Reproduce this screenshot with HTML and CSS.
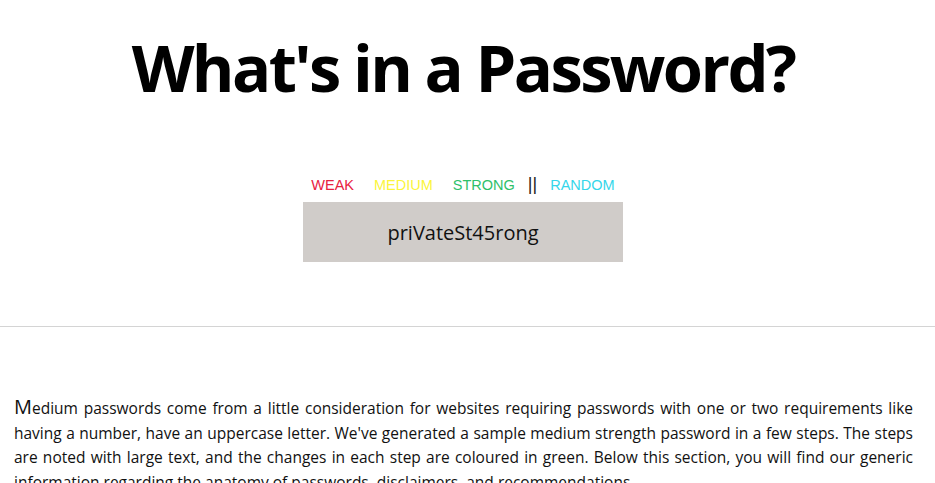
FILE: index.html
```html
<!DOCTYPE html>
<html lang="en">
<head>
<meta charset="utf-8">
<title>What's in a Password?</title>
<link rel="stylesheet" href="styles.css">
</head>
<body>
<header class="top">
  <h1 class="title">What's in a Password?</h1>
  <nav class="modes">
    <a class="mode weak" href="#">WEAK</a>
    <a class="mode medium" href="#">MEDIUM</a>
    <a class="mode strong" href="#">STRONG</a>
    <span class="sep">||</span>
    <a class="mode random" href="#">RANDOM</a>
  </nav>
  <div class="sample">priVateSt45rong</div>
</header>
<hr class="rule">
<section class="intro">
  <p class="lead">Medium passwords come from a little consideration for websites requiring passwords with one or two requirements like having a number, have an uppercase letter. We've generated a sample medium strength password in a few steps. The steps are noted with large text, and the changes in each step are coloured in green. Below this section, you will find our generic information regarding the anatomy of passwords, disclaimers, and recommendations.</p>
</section>
</body>
</html>
```
FILE: styles.css
```css
html, body {
  margin: 0;
  padding: 0;
  background: #ffffff;
  color: #111111;
  font-family: "Open Sans", "Noto Sans", sans-serif;
}

.top {
  width: 926px;
  display: flex;
  flex-direction: column;
  align-items: center;
}

.title {
  margin: 25px 0 0;
  font-size: 65px;
  line-height: 84px;
  font-weight: 700;
  letter-spacing: -2.6px;
  color: #000000;
}

.modes {
  margin-top: 68px;
  display: flex;
  align-items: center;
  gap: 20px;
  font-family: "Liberation Sans", Arial, sans-serif;
  font-size: 14.5px;
  line-height: 16px;
}

.mode {
  text-decoration: none;
}

.weak { color: #e8223f; }
.medium { color: #fbf53c; }
.strong { color: #2ec06a; }
.random { color: #35d6ea; }

.sep {
  color: #222222;
  font-size: 18px;
  margin: 0 -7px 0 -7px;
  position: relative;
  top: -1px;
}

.sample {
  margin-top: 9px;
  width: 320px;
  height: 60px;
  background: #d0ccc9;
  display: flex;
  align-items: center;
  justify-content: center;
  font-size: 20px;
  color: #111111;
}

.rule {
  margin: 64px 0 0;
  border: 0;
  border-top: 1px solid #d4d4d4;
  height: 0;
}

.intro {
  width: 927px;
  box-sizing: border-box;
  padding: 0 14px;
}

.lead {
  margin: 68px 0 0;
  font-size: 15.5px;
  line-height: 24.5px;
  text-align: justify;
}

.lead::first-letter {
  font-size: 20px;
}
```
